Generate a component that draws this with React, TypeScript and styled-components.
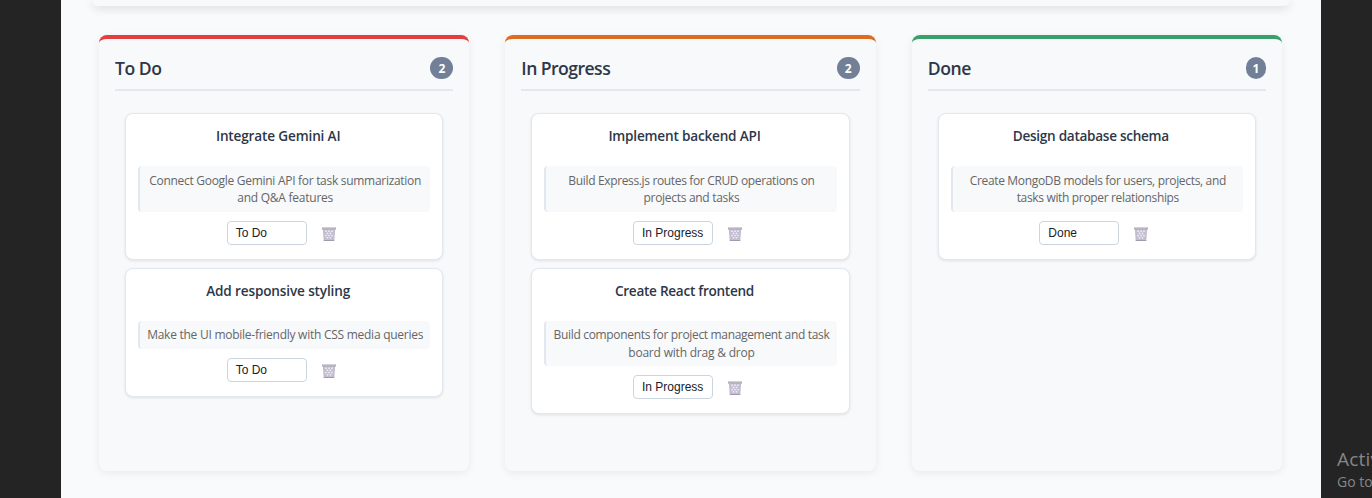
import React from "react";
import styled, { createGlobalStyle } from "styled-components";

const Global = createGlobalStyle`
  * { box-sizing: border-box; }
  body {
    margin: 0;
    height: 498px;
    overflow: hidden;
    background: #242424;
    font-family: "Open Sans", "Noto Sans", sans-serif;
    color: #2d3748;
  }
`;

const Page = styled.div`
  position: relative;
  height: 498px;
  overflow: hidden;
  padding: 0 51px 0 61px;
`;

const Shell = styled.main`
  height: 498px;
  background: #f9fafc;
  padding: 0 30px;
  overflow: hidden;
`;

const TopPanel = styled.div`
  height: 6px;
  margin: 0 1px;
  border-radius: 0 0 12px 12px;
  background: #f8f9fb;
  box-shadow: 0 2px 10px rgba(0, 0, 0, 0.15);
`;

const Board = styled.div`
  display: grid;
  grid-template-columns: repeat(3, minmax(0, 1fr));
  gap: 36px;
  padding: 29px 9px 0 8px;
`;

const Column = styled.section<{ $accent: string }>`
  height: 436px;
  padding: 16px;
  border-top: 4px solid ${(p) => p.$accent};
  border-radius: 8px;
  background: #f7f9fb;
  box-shadow: 0 2px 8px rgba(0, 0, 0, 0.07);
`;

const ColumnHeader = styled.header`
  display: flex;
  align-items: center;
  justify-content: space-between;
  height: 36px;
  padding-bottom: 8px;
  border-bottom: 2px solid #e2e8f0;
`;

const ColumnTitle = styled.h3<{ $spacing: number }>`
  margin: 0;
  font-size: 17.6px;
  line-height: 26px;
  font-weight: 600;
  letter-spacing: ${(p) => p.$spacing}px;
`;

const Count = styled.span<{ $narrow: boolean }>`
  width: ${(p) => (p.$narrow ? 20 : 23)}px;
  height: 22px;
  border-radius: 12px;
  background: #718096;
  color: #fff;
  font-size: 12px;
  line-height: 23px;
  font-weight: 700;
  text-align: center;
`;

const CardList = styled.div`
  display: flex;
  flex-direction: column;
  gap: 8px;
  padding: 22px 10px 0;
`;

const Card = styled.article`
  padding: 12px;
  border: 1px solid #e2e8f0;
  border-radius: 8px;
  background: #fff;
  box-shadow: 0 1px 3px rgba(0, 0, 0, 0.1);
  text-align: center;
`;

const CardTitle = styled.h4<{ $spacing: number }>`
  margin: 0 0 20px;
  padding-right: 12px;
  font-size: 13.6px;
  line-height: 20px;
  font-weight: 600;
  height: 20px;
  letter-spacing: ${(p) => p.$spacing}px;
`;

const Description = styled.p`
  margin: 0 0 9px;
  padding: 6.5px 6px 5.5px;
  border-left: 2px solid #e2e8f0;
  border-radius: 4px;
  background: #f7f9fb;
  color: #666;
  font-size: 12px;
  line-height: 16.8px;
`;

const Line = styled.span<{ $spacing: number }>`
  display: block;
  white-space: nowrap;
  letter-spacing: ${(p) => p.$spacing}px;

  & + & {
    line-height: 17.6px;
    margin-bottom: -0.8px;
  }
`;

const Actions = styled.div`
  display: flex;
  align-items: center;
  justify-content: center;
  gap: 14px;
  height: 26px;
  padding-bottom: 2px;
`;

const StatusField = styled.div`
  width: 80px;
  height: 24px;
  padding: 0 8px;
  border: 1px solid #cbd5e0;
  border-radius: 4px;
  background: #fff;
  color: #1a202c;
  font-family: "Liberation Sans", Arial, sans-serif;
  font-size: 12px;
  line-height: 22px;
  text-align: left;
  white-space: nowrap;
`;

const DeleteButton = styled.button`
  display: flex;
  padding: 2px 5px 0 0;
  border: 0;
  background: none;
`;

const Watermark = styled.aside`
  position: absolute;
  left: 1337px;
  top: 447px;
  width: 200px;
  color: #868686;
  white-space: nowrap;
`;

const WatermarkTitle = styled.div`
  font-size: 19px;
  line-height: 25px;
  letter-spacing: 0.2px;
`;

const WatermarkText = styled.div`
  font-size: 14px;
  line-height: 19px;
`;

const Basket = () => (
  <svg width="16" height="16" viewBox="0 0 16 16">
    <path d="M1.8 2.5h12.4l-.9 12.5H2.7z" fill="#c3bdd0" />
    <g fill="#f1eef5">
      <circle cx="5" cy="5.2" r=".9" />
      <circle cx="8" cy="5.2" r=".9" />
      <circle cx="11" cy="5.2" r=".9" />
      <circle cx="6.5" cy="7.4" r=".9" />
      <circle cx="9.5" cy="7.4" r=".9" />
      <circle cx="5" cy="9.6" r=".9" />
      <circle cx="8" cy="9.6" r=".9" />
      <circle cx="11" cy="9.6" r=".9" />
      <circle cx="6.5" cy="11.8" r=".9" />
      <circle cx="9.5" cy="11.8" r=".9" />
    </g>
    <path d="M1 1.5h14v2H1z" fill="#aaa4b4" />
    <path d="M2 2.3h12" stroke="#c8c3d0" strokeWidth=".7" />
    <path d="M2.8 14h10.4v1H2.8z" fill="#a19baf" />
  </svg>
);

type Txt = [string, number];
type Task = { title: Txt; lines: Txt[] };
type Col = { name: Txt; accent: string; tasks: Task[] };

const columns: Col[] = [
  {
    name: ["To Do", -0.5],
    accent: "#e53e3e",
    tasks: [
      {
        title: ["Integrate Gemini AI", -0.16],
        lines: [
          ["Connect Google Gemini API for task summarization", -0.29],
          ["and Q&A features", -0.25],
        ],
      },
      {
        title: ["Add responsive styling", -0.15],
        lines: [["Make the UI mobile-friendly with CSS media queries", -0.26]],
      },
    ],
  },
  {
    name: ["In Progress", -0.55],
    accent: "#dd6b20",
    tasks: [
      {
        title: ["Implement backend API", -0.2],
        lines: [
          ["Build Express.js routes for CRUD operations on", -0.35],
          ["projects and tasks", -0.3],
        ],
      },
      {
        title: ["Create React frontend", -0.28],
        lines: [
          ["Build components for project management and task", -0.33],
          ["board with drag & drop", -0.2],
        ],
      },
    ],
  },
  {
    name: ["Done", -0.4],
    accent: "#38a169",
    tasks: [
      {
        title: ["Design database schema", -0.3],
        lines: [
          ["Create MongoDB models for users, projects, and", -0.33],
          ["tasks with proper relationships", -0.34],
        ],
      },
    ],
  },
];

export default function App() {
  return (
    <Page>
      <Global />
      <Shell>
        <TopPanel />
        <Board>
          {columns.map((col) => (
            <Column key={col.name[0]} $accent={col.accent}>
              <ColumnHeader>
                <ColumnTitle $spacing={col.name[1]}>{col.name[0]}</ColumnTitle>
                <Count $narrow={col.tasks.length === 1}>{col.tasks.length}</Count>
              </ColumnHeader>
              <CardList>
                {col.tasks.map((task) => (
                  <Card key={task.title[0]}>
                    <CardTitle $spacing={task.title[1]}>{task.title[0]}</CardTitle>
                    <Description>
                      {task.lines.map(([text, spacing]) => (
                        <Line key={text} $spacing={spacing}>
                          {text}
                        </Line>
                      ))}
                    </Description>
                    <Actions>
                      <StatusField>{col.name[0]}</StatusField>
                      <DeleteButton aria-label="Delete task">
                        <Basket />
                      </DeleteButton>
                    </Actions>
                  </Card>
                ))}
              </CardList>
            </Column>
          ))}
        </Board>
      </Shell>
      <Watermark>
        <WatermarkTitle>Activate Windows</WatermarkTitle>
        <WatermarkText>Go to Settings to activate Windows.</WatermarkText>
      </Watermark>
    </Page>
  );
}
